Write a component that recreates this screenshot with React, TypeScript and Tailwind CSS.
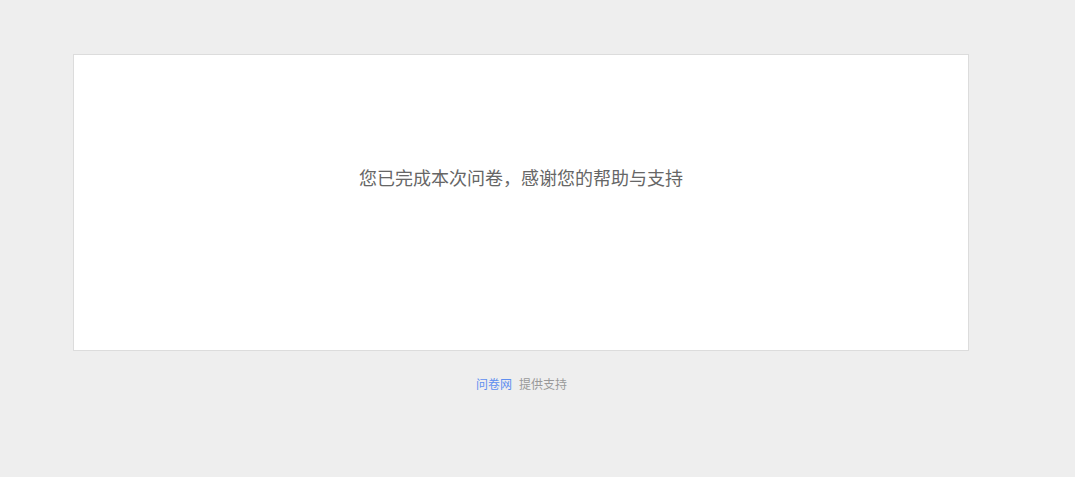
export default function App() {
  return (
    <div
      className="min-h-[477px] w-full bg-[#eeeeee] pt-[54px]"
      style={{ fontFamily: '"Microsoft YaHei", "Noto Sans CJK SC", sans-serif' }}
    >
      <div className="ml-[73px] w-[896px]">
        {/* Card */}
        <div className="h-[297px] border border-[#dcdcdc] bg-white pt-[109px] text-center">
          <p className="text-[18px] leading-[26px] text-[#666666]">
            您已完成本次问卷，感谢您的帮助与支持
          </p>
        </div>

        {/* Footer */}
        <div className="mt-[25px] flex items-center justify-center gap-[7px] pl-[1px] text-[12px] leading-[16px]">
          <a href="#" className="text-[#5f8ff0]">问卷网</a>
          <span className="text-[#999999]">提供支持</span>
        </div>
      </div>
    </div>
  );
}
